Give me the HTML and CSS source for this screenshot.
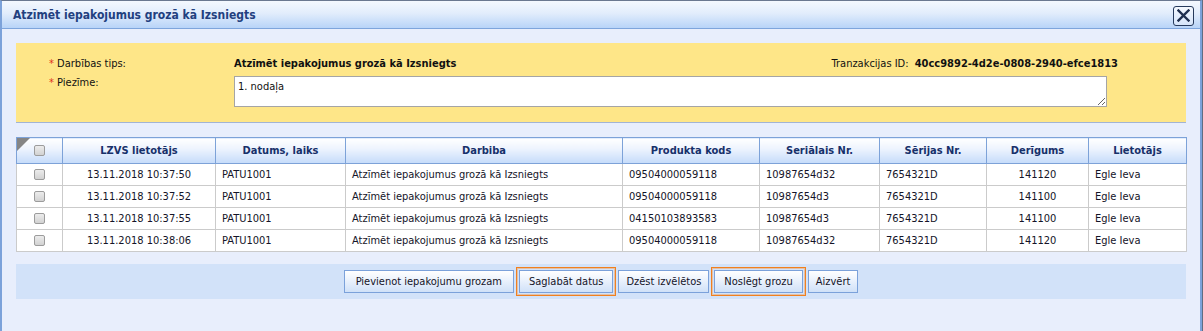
FILE: index.html
```html
<!DOCTYPE html>
<html lang="lv">
<head>
<meta charset="utf-8">
<title>Atzīmēt iepakojumus grozā kā Izsniegts</title>
<link rel="stylesheet" href="styles.css">
</head>
<body>
<div class="window">
  <div class="titlebar">
    <span class="title">Atzīmēt iepakojumus grozā kā Izsniegts</span>
    <button class="close" type="button" aria-label="Aizvērt">
      <svg width="13" height="13" viewBox="0 0 13 13"><path d="M1.5 1.5 L11.5 11.5 M11.5 1.5 L1.5 11.5" stroke="#1f2f4f" stroke-width="2.4" stroke-linecap="square" fill="none"/></svg>
    </button>
  </div>
  <div class="content">
    <div class="panel">
      <div class="prow">
        <span class="plabel"><span class="req">*</span> Darbības tips:</span>
        <span class="pvalue">Atzīmēt iepakojumus grozā kā Izsniegts</span>
        <span class="trans">Tranzakcijas ID: <b class="transid">40cc9892-4d2e-0808-2940-efce1813</b></span>
      </div>
      <div class="prow prow-note">
        <span class="plabel"><span class="req">*</span> Piezīme:</span>
        <textarea class="note">1. nodaļa</textarea>
      </div>
    </div>

    <table class="grid">
      <colgroup>
        <col class="w-chk"><col class="w-user"><col class="w-date"><col class="w-act"><col class="w-prod"><col class="w-ser"><col class="w-batch"><col class="w-exp"><col class="w-usr2">
      </colgroup>
      <thead>
        <tr>
          <th class="corner"><input type="checkbox" class="chk"></th>
          <th>LZVS lietotājs</th>
          <th>Datums, laiks</th>
          <th>Darbiba</th>
          <th>Produkta kods</th>
          <th>Seriālais Nr.</th>
          <th>Sērijas Nr.</th>
          <th>Derīgums</th>
          <th>Lietotājs</th>
        </tr>
      </thead>
      <tbody>
        <tr>
          <td class="c"><input type="checkbox" class="chk"></td>
          <td class="c">13.11.2018 10:37:50</td>
          <td>PATU1001</td>
          <td>Atzīmēt iepakojumus grozā kā Izsniegts</td>
          <td>09504000059118</td>
          <td>10987654d32</td>
          <td>7654321D</td>
          <td class="c">141120</td>
          <td>Egle Ieva</td>
        </tr>
        <tr>
          <td class="c"><input type="checkbox" class="chk"></td>
          <td class="c">13.11.2018 10:37:52</td>
          <td>PATU1001</td>
          <td>Atzīmēt iepakojumus grozā kā Izsniegts</td>
          <td>09504000059118</td>
          <td>10987654d3</td>
          <td>7654321D</td>
          <td class="c">141100</td>
          <td>Egle Ieva</td>
        </tr>
        <tr>
          <td class="c"><input type="checkbox" class="chk"></td>
          <td class="c">13.11.2018 10:37:55</td>
          <td>PATU1001</td>
          <td>Atzīmēt iepakojumus grozā kā Izsniegts</td>
          <td>04150103893583</td>
          <td>10987654d3</td>
          <td>7654321D</td>
          <td class="c">141100</td>
          <td>Egle Ieva</td>
        </tr>
        <tr>
          <td class="c"><input type="checkbox" class="chk"></td>
          <td class="c">13.11.2018 10:38:06</td>
          <td>PATU1001</td>
          <td>Atzīmēt iepakojumus grozā kā Izsniegts</td>
          <td>09504000059118</td>
          <td>10987654d32</td>
          <td>7654321D</td>
          <td class="c">141120</td>
          <td>Egle Ieva</td>
        </tr>
      </tbody>
    </table>

    <div class="actions">
      <button class="btn btn-wide" type="button">Pievienot iepakojumu grozam</button>
      <span class="ring"><button class="btn" type="button">Saglabāt datus</button></span>
      <button class="btn btn-narrow" type="button">Dzēst izvēlētos</button>
      <span class="ring"><button class="btn" type="button">Noslēgt grozu</button></span>
      <button class="btn btn-narrow" type="button">Aizvērt</button>
    </div>
  </div>
</div>
</body>
</html>
```

FILE: styles.css
```css
* { box-sizing: border-box; }

body {
  margin: 0;
  background: #5f6d82;
  font-family: "DejaVu Sans Condensed", "DejaVu Sans", sans-serif;
  font-size: 11px;
  color: #141428;
}

.window {
  width: 1202px;
  height: 331px;
  border-top: 1px solid #6a7890;
  border-left: 2px solid #7ca2da;
  border-right: 2px solid #7ca2da;
  background: #e8eefc;
}

.titlebar {
  height: 28px;
  border-bottom: 1px solid #7ea5dc;
  background: linear-gradient(#f4f8fe, #e2edfc 45%, #b8d4f8);
  display: flex;
  align-items: center;
  justify-content: space-between;
  padding: 0 6px 0 11px;
}

.title {
  font-weight: bold;
  font-size: 12px;
  color: #22407f;
}

.close {
  width: 21px;
  height: 20px;
  padding: 0;
  border: 1px solid #263a5c;
  border-radius: 3px;
  background: linear-gradient(#f4f8fe, #d6e5fa);
  display: flex;
  align-items: center;
  justify-content: center;
  margin-top: 2px;
}

.content {
  padding: 14px 14px 0 14px;
}

.panel {
  height: 80px;
  background: #fee688;
  border-bottom: 1px solid #a2b4d4;
  padding: 14px 68px 0 33px;
}

.prow {
  display: flex;
  align-items: flex-start;
  line-height: 14px;
  color: #111;
}

.prow-note {
  margin-top: 5px;
}

.plabel {
  width: 185px;
  flex: none;
}

.req {
  color: #e0301e;
}

.pvalue {
  flex: 1;
  font-weight: bold;
}

.transid {
  margin-left: 3px;
}

.note {
  width: 873px;
  height: 31px;
  margin: 0;
  border: 1px solid #a5a5a5;
  padding: 3px 3px 2px;
  font-family: inherit;
  font-size: 11px;
  line-height: 14px;
  color: #111;
  background: #fff;
}

.grid {
  margin-top: 14px;
  width: 1170px;
  border-collapse: collapse;
  table-layout: fixed;
  background: #fff;
}

.w-chk { width: 46px; }
.w-user { width: 153px; }
.w-date { width: 130px; }
.w-act { width: 277px; }
.w-prod { width: 137px; }
.w-ser { width: 120px; }
.w-batch { width: 107px; }
.w-exp { width: 102px; }
.w-usr2 { width: 98px; }

.grid th {
  height: 26px;
  border: 1px solid #7da2d8;
  background: linear-gradient(#ffffff, #eef4fe 40%, #c5dbfa);
  font-weight: bold;
  color: #17306a;
  text-align: center;
  padding: 0 6px;
}

.grid td {
  height: 22px;
  border: 1px solid #cbcbcb;
  padding: 0 6px;
  white-space: nowrap;
  color: #141428;
}

.grid .c {
  text-align: center;
}

.corner {
  position: relative;
}

.corner::before {
  content: "";
  position: absolute;
  top: 0;
  left: 0;
  border-top: 13px solid #858585;
  border-right: 13px solid transparent;
}

.chk {
  appearance: none;
  -webkit-appearance: none;
  width: 11px;
  height: 11px;
  margin: 0;
  border: 1px solid #9c9c9c;
  border-radius: 2px;
  background: linear-gradient(#ececec, #d2d2d2);
  vertical-align: middle;
  display: inline-block;
  position: relative;
  top: -1px;
}

.actions {
  margin-top: 12px;
  height: 35px;
  background: #d2e2f9;
  display: flex;
  justify-content: center;
  align-items: center;
  gap: 2px;
}

.btn {
  height: 23px;
  padding: 0 9px;
  border: 1px solid #7ba1da;
  background: linear-gradient(#ffffff, #e8f0fc 50%, #d0e1f8);
  font-family: inherit;
  font-size: 11px;
  color: #141428;
}

.btn-wide {
  padding: 0 11px;
}

.btn-narrow {
  padding: 0 7px;
}

.ring {
  display: flex;
  border: 1px solid #f08020;
  box-shadow: inset 0 0 0 1px rgba(244, 150, 70, 0.45);
  padding: 2px;
  background: #d2e2f9;
}
```
